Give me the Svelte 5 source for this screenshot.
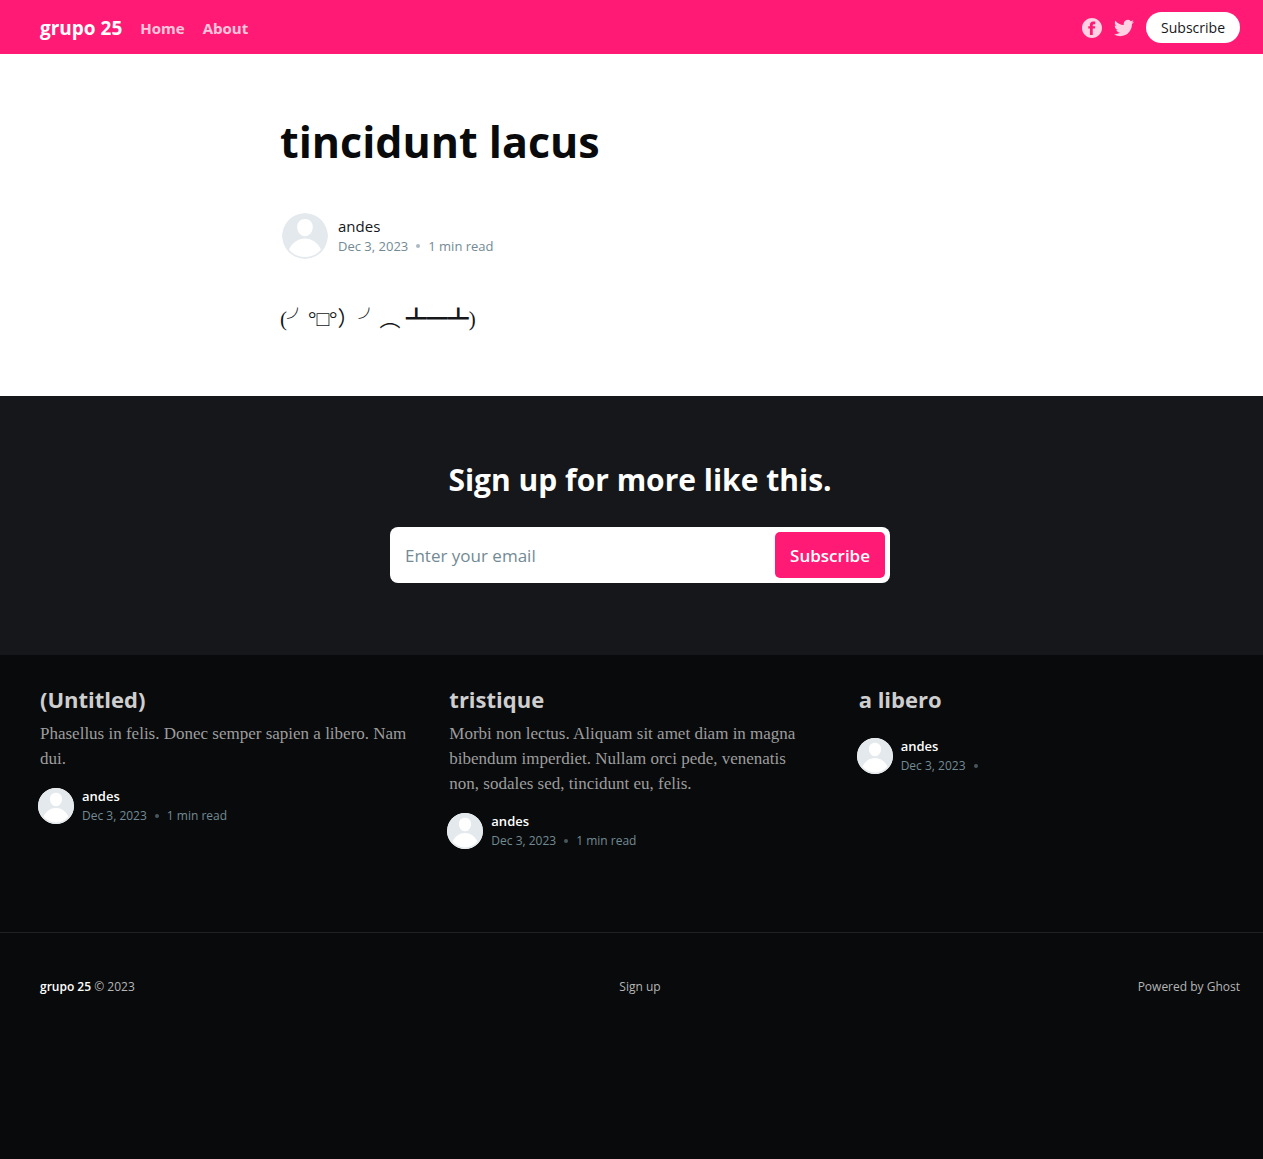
<script>
  const links = ['Home', 'About'];
  const posts = [
    {
      title: '(Untitled)',
      excerpt: 'Phasellus in felis. Donec semper sapien a libero. Nam dui.',
      read: '1 min read'
    },
    {
      title: 'tristique',
      excerpt:
        'Morbi non lectus. Aliquam sit amet diam in magna bibendum imperdiet. Nullam orci pede, venenatis non, sodales sed, tincidunt eu, felis.',
      read: '1 min read'
    },
    { title: 'a libero', excerpt: '', read: '' }
  ];
</script>

{#snippet avatar()}
  <svg class="avatar" viewBox="0 0 46 46" aria-hidden="true">
    <circle cx="23" cy="23" r="23" fill="#e4e9ed" />
    <path
      fill="#fff"
      d="M23 6c4.600 0 7.800 3.500 7.800 8 0 4.800-3.400 9.300-7.800 9.300s-7.800-4.500-7.800-9.300c0-4.500 3.200-8 7.800-8zM7 36.500C10.500 29.500 16 25.500 23 25.500s12.500 4 16 11C35.200 41.400 29.500 44 23 44S10.800 41.400 7 36.500z"
    />
  </svg>
{/snippet}

<div class="site">
  <header class="head">
    <a class="logo" href="#home">grupo 25</a>
    <nav>
      {#each links as link}
        <a href="#{link.toLowerCase()}">{link}</a>
      {/each}
    </nav>
    <div class="actions">
      <a class="social" href="#facebook" aria-label="Facebook">
        <svg viewBox="0 0 32 32" width="20" height="20">
          <path
            fill="currentColor"
            d="M16 0C7.200 0 0 7.200 0 16s7.200 16 16 16 16-7.200 16-16S24.800 0 16 0zm5.200 9.900h-2.600c-.9 0-1.400.5-1.400 1.400V13.200h4l-.5 3.600h-3.500V27h-4.500V16.800H10v-3.600h2.700v-2.700C12.700 7.600 14.500 5.400 17.800 5.400h3.400v4.500z"
          />
        </svg>
      </a>
      <a class="social" href="#twitter" aria-label="Twitter">
        <svg viewBox="0 0 24 24" width="20" height="20">
          <path
            fill="currentColor"
            d="M23.950 4.570a10 10 0 0 1-2.820.77 4.960 4.960 0 0 0 2.160-2.720c-.95.55-2 .95-3.130 1.180a4.920 4.920 0 0 0-8.380 4.480C7.690 8.090 4.070 6.130 1.640 3.160a4.820 4.820 0 0 0-.67 2.480c0 1.710.87 3.210 2.190 4.100a4.900 4.900 0 0 1-2.230-.62v.06a4.920 4.920 0 0 0 3.950 4.830 5 5 0 0 1-2.210.08 4.940 4.940 0 0 0 4.600 3.420A9.870 9.870 0 0 1 0 19.540a13.990 13.990 0 0 0 7.550 2.210c9.050 0 14-7.500 14-13.980 0-.21 0-.42-.02-.63a9.940 9.940 0 0 0 2.460-2.550z"
          />
        </svg>
      </a>
      <button class="pill" type="button">Subscribe</button>
    </div>
  </header>

  <main>
    <article>
      <h1>tincidunt lacus</h1>
      <div class="byline">
        {@render avatar()}
        <div>
          <a class="author" href="#andes">andes</a>
          <div class="meta"><time datetime="2023-12-03">Dec 3, 2023</time><i></i><span>1 min read</span></div>
        </div>
      </div>
      <p class="content">(╯°□°）╯︵ ┻━┻)</p>
    </article>
  </main>

  <section class="signup">
    <h2>Sign up for more like this.</h2>
    <form>
      <input type="email" placeholder="Enter your email" aria-label="Email address" />
      <button type="button">Subscribe</button>
    </form>
  </section>

  <section class="feed">
    {#each posts as post}
      <article class="card">
        <h2><a href="#post">{post.title}</a></h2>
        <p>{post.excerpt}</p>
        <div class="byline small">
          {@render avatar()}
          <div>
            <a class="author" href="#andes">andes</a>
            <div class="meta"><time datetime="2023-12-03">Dec 3, 2023</time><i></i><span>{post.read}</span></div>
          </div>
        </div>
      </article>
    {/each}
  </section>

  <footer>
    <div><a class="home" href="#home">grupo 25</a> © 2023</div>
    <a href="#signup">Sign up</a>
    <a class="powered" href="#ghost">Powered by Ghost</a>
  </footer>
</div>

<style>
  :global(html) {
    background: #090a0b;
  }
  :global(body) {
    margin: 0;
  }
  .site {
    font-family: 'Open Sans', 'Noto Sans', sans-serif;
    color: #15171a;
    background: #fff;
  }
  h1,
  h2,
  p {
    margin: 0;
  }
  a {
    color: inherit;
    text-decoration: none;
  }
  button,
  input {
    font-family: inherit;
    border: 0;
    margin: 0;
  }
  .head,
  main,
  .signup,
  .feed,
  footer {
    padding-left: 40px;
    padding-right: 23px;
  }
  .head {
    display: flex;
    align-items: center;
    box-sizing: border-box;
    height: 54px;
    padding-top: 1px;
    background: #ff1a75;
    color: #fff;
  }
  .logo {
    font-size: 19px;
    font-weight: 700;
    margin-right: 18px;
  }
  nav {
    display: flex;
    gap: 18px;
    font-size: 15px;
    font-weight: 700;
    opacity: 0.75;
  }
  .actions {
    display: flex;
    align-items: center;
    gap: 12px;
    margin-left: auto;
  }
  .social {
    display: flex;
    opacity: 0.8;
  }
  .pill {
    height: 31px;
    padding: 0 15px;
    border-radius: 16px;
    background: #fff;
    color: #15171a;
    font-size: 14px;
    font-weight: 500;
  }
  main {
    padding-top: 60px;
    padding-bottom: 60px;
  }
  main article {
    max-width: 720px;
    margin: 0 auto;
  }
  h1 {
    font-size: 43px;
    line-height: 56px;
    font-weight: 700;
    color: #090a0b;
  }
  .byline {
    display: flex;
    align-items: center;
    gap: 10px;
  }
  main .byline {
    margin-top: 43px;
    padding-left: 2px;
  }
  .avatar {
    width: 46px;
    height: 46px;
    flex: none;
    border-radius: 50%;
  }
  .author {
    display: block;
    font-size: 15px;
    line-height: 20px;
    font-weight: 500;
  }
  .meta {
    display: flex;
    align-items: center;
    font-size: 13px;
    line-height: 20px;
    color: #738a94;
  }
  .meta i {
    width: 4px;
    height: 4px;
    margin: 0 8px;
    border-radius: 50%;
    background: currentColor;
    opacity: 0.6;
  }
  .content {
    margin-top: 44px;
    font-family: 'Liberation Serif', 'Noto Sans CJK JP', serif;
    font-size: 21px;
    line-height: 33px;
  }
  .signup {
    display: flex;
    flex-direction: column;
    align-items: center;
    background: #15171a;
    padding-top: 64px;
    padding-bottom: 72px;
  }
  .signup h2 {
    font-size: 30px;
    line-height: 39px;
    color: #fff;
  }
  form {
    display: flex;
    box-sizing: border-box;
    width: 100%;
    max-width: 500px;
    margin-top: 28px;
    padding: 5px;
    border-radius: 8px;
    background: #fff;
  }
  form input {
    flex: 1;
    min-width: 0;
    height: 46px;
    padding: 0 10px;
    box-sizing: border-box;
    background: none;
    font-size: 17px;
    outline: none;
  }
  form input::placeholder {
    color: #738a94;
    opacity: 1;
  }
  form button {
    padding: 0 15px;
    border-radius: 5px;
    background: #ff1a75;
    color: #fff;
    font-size: 17px;
    font-weight: 600;
  }
  .feed {
    display: grid;
    grid-template-columns: repeat(3, 1fr);
    gap: 28px;
    align-items: start;
    padding-top: 29px;
    padding-bottom: 82px;
    background: #090a0b;
  }
  .card {
    display: flex;
    flex-direction: column;
  }
  .card h2 {
    font-size: 22px;
    line-height: 30px;
    color: #cececf;
  }
  .card p {
    margin-top: 7px;
    padding-right: 12px;
    font-family: 'Liberation Serif', serif;
    font-size: 17px;
    line-height: 25px;
    color: #9d9d9e;
  }
  .small {
    margin-top: 16px;
    margin-left: -2px;
    gap: 8px;
  }
  .small .avatar {
    width: 36px;
    height: 36px;
    background: #fff;
  }
  .small .author {
    font-size: 13px;
    line-height: 19px;
    font-weight: 600;
    color: #fff;
  }
  .small .meta {
    font-size: 12px;
    line-height: 19px;
  }
  footer {
    display: grid;
    grid-template-columns: 1fr auto 1fr;
    padding-top: 44px;
    padding-bottom: 160px;
    border-top: 1px solid #202123;
    background: #090a0b;
    color: #b5b6b7;
    font-size: 12px;
    line-height: 20px;
  }
  .home {
    color: #fff;
    font-weight: 600;
  }
  .powered {
    text-align: right;
  }
</style>
